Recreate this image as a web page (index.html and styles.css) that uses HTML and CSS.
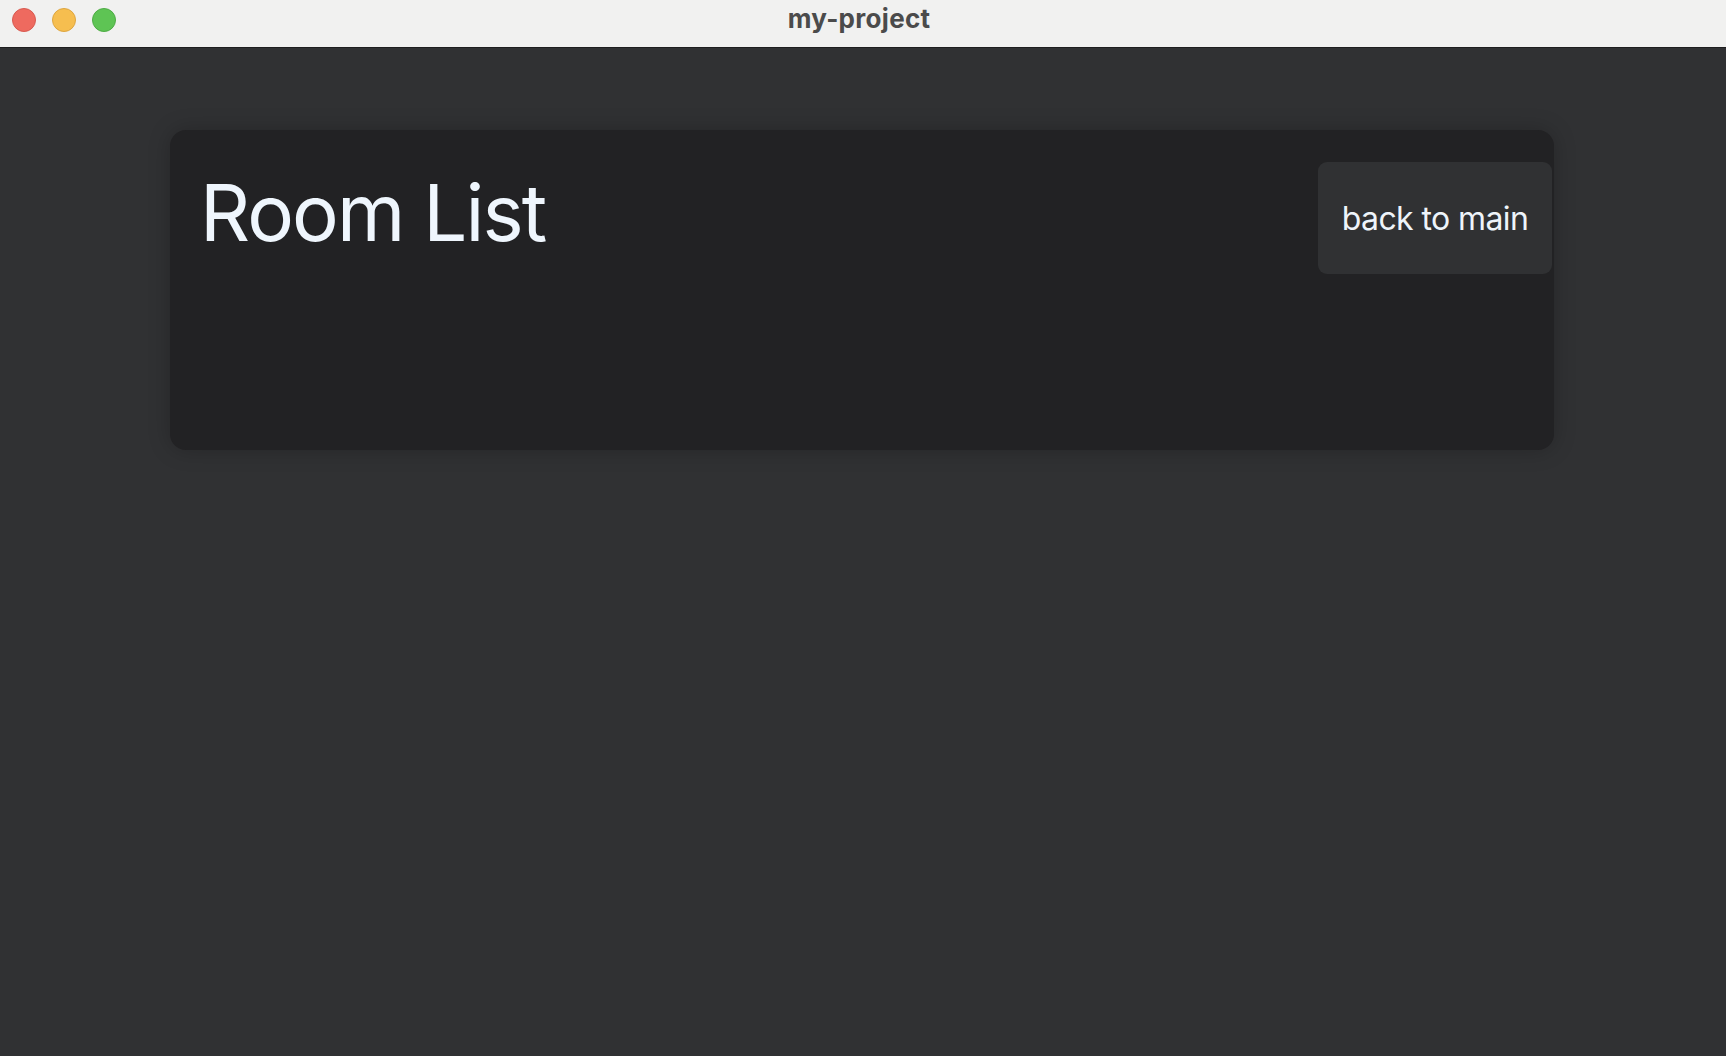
FILE: index.html
```html
<!DOCTYPE html>
<html lang="en">
<head>
<meta charset="utf-8">
<title>my-project</title>
<link rel="stylesheet" href="styles.css">
</head>
<body>
<div class="window">
  <header class="titlebar">
    <div class="lights">
      <span class="light red"></span>
      <span class="light yellow"></span>
      <span class="light green"></span>
    </div>
    <div class="title">my-project</div>
  </header>
  <main class="content">
    <section class="card">
      <h1 class="heading">Room List</h1>
      <button class="back-btn" type="button">back to main</button>
    </section>
  </main>
</div>
</body>
</html>
```
FILE: styles.css
```css
html, body {
  margin: 0;
  padding: 0;
  height: 100%;
}
body {
  background: #303133;
  font-family: Inter, "Noto Sans", sans-serif;
  overflow: hidden;
}
.window {
  display: flex;
  flex-direction: column;
  height: 100%;
}
.titlebar {
  height: 47px;
  flex: none;
  background: #f1f1f0;
  border-bottom: 1px solid #1e1e1f;
  display: flex;
  align-items: center;
  position: relative;
}
.lights {
  display: flex;
  gap: 16px;
  padding-left: 12px;
  margin-top: -7px;
}
.light {
  width: 24px;
  height: 24px;
  border-radius: 50%;
  box-sizing: border-box;
}
.red { background: #ee6a5f; border: 1px solid #d85a50; }
.yellow { background: #f6be4f; border: 1px solid #dea640; }
.green { background: #5ec454; border: 1px solid #4eac45; }
.title {
  position: absolute;
  left: 0;
  right: 0;
  top: 0;
  text-align: center;
  line-height: 38px;
  font-family: Inter, "Liberation Sans", sans-serif;
  font-weight: 700;
  font-size: 26px;
  color: #4b4b4b;
  letter-spacing: 0.3px;
  padding-right: 8px;
}
.content {
  flex: 1;
  padding: 82px 172px 0 170px;
}
.card {
  background: #222224;
  border-radius: 16px;
  height: 320px;
  box-sizing: border-box;
  padding: 32px 2px 0 30px;
  display: flex;
  justify-content: space-between;
  align-items: flex-start;
  box-shadow: 0 0 22px rgba(0, 0, 0, 0.22);
}
.heading {
  margin: 0;
  padding-top: 3px;
  font-weight: 400;
  font-size: 78px;
  line-height: 95px;
  color: #eff6fd;
  letter-spacing: -1.9px;
}
.back-btn {
  width: 234px;
  height: 112px;
  border: none;
  border-radius: 9px;
  background: #303133;
  color: #eef4fa;
  font-family: Inter, "Noto Sans", sans-serif;
  font-size: 32px;
  letter-spacing: -0.6px;
  padding: 0;
  cursor: pointer;
}
```
